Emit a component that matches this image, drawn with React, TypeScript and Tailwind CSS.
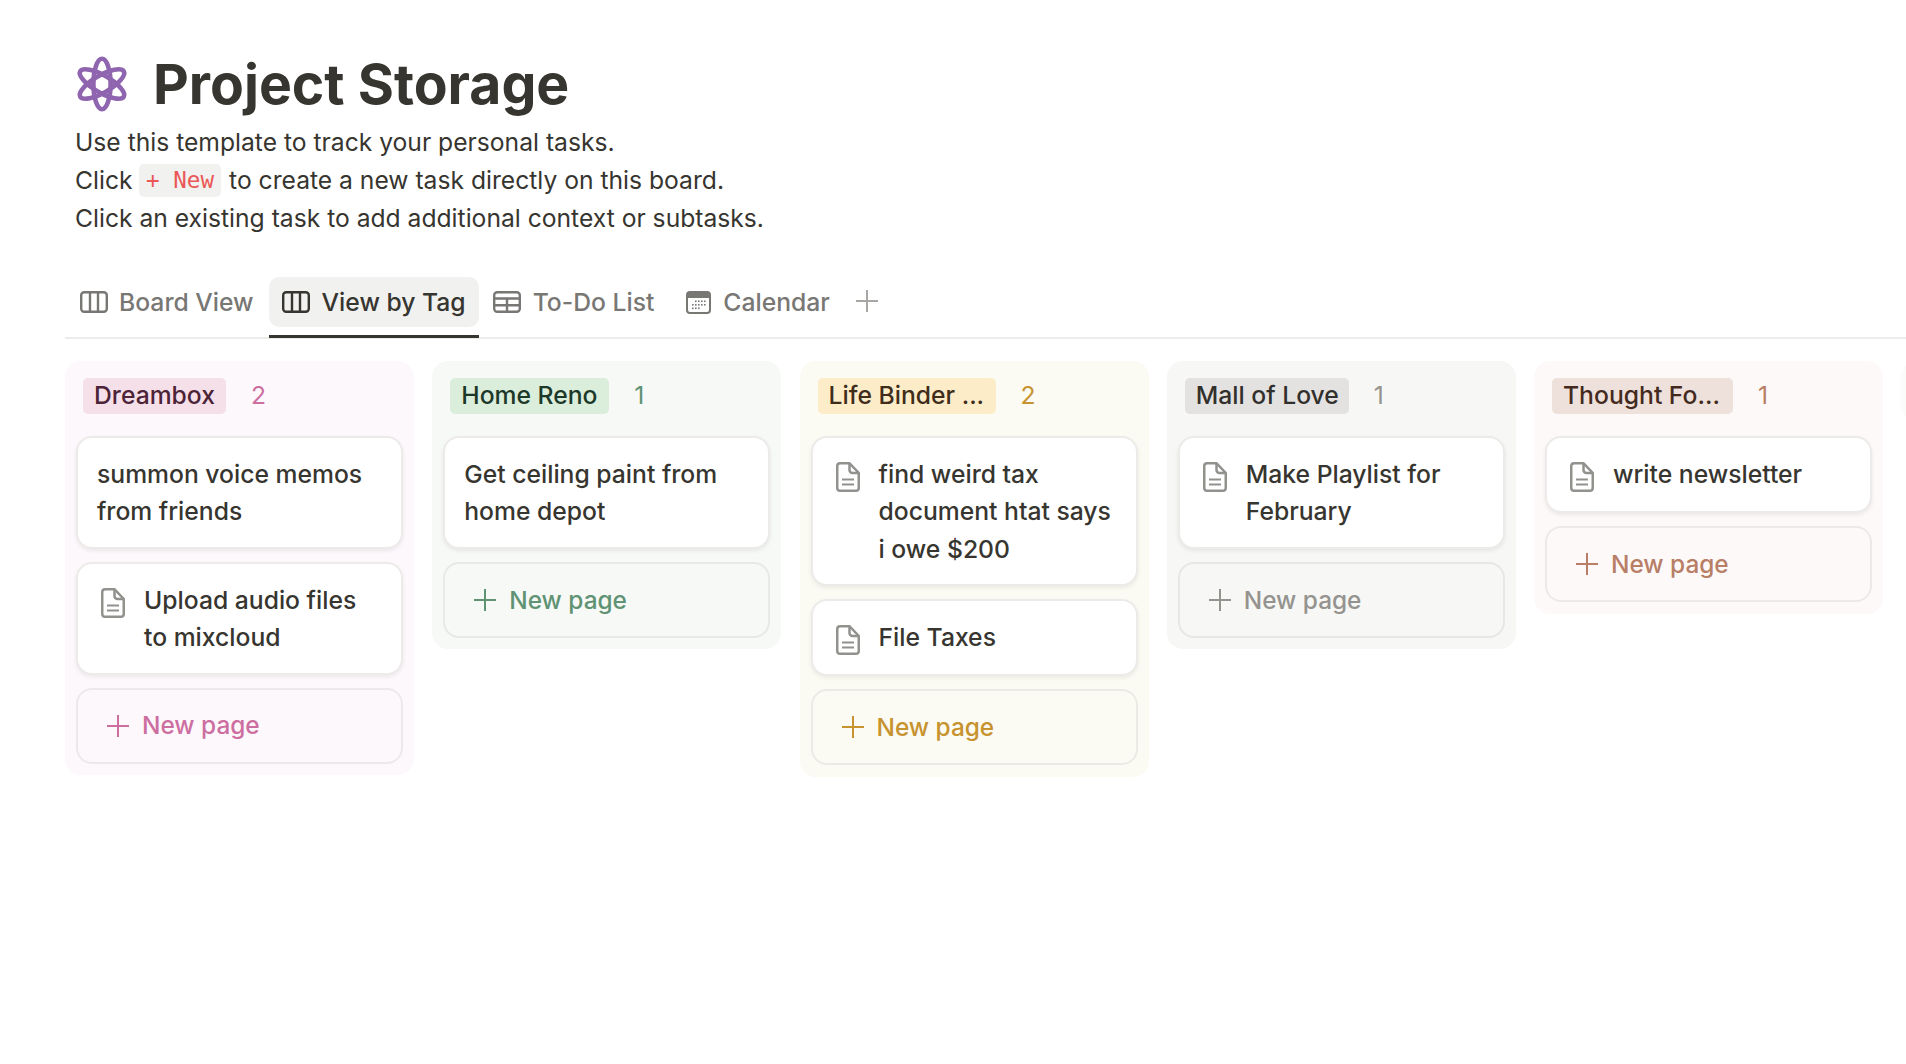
import React from "react";

function Atom() {
  return (
    <svg width="54" height="56" viewBox="0 0 54 56" fill="none" stroke="#9065b0" strokeWidth="4.6">
      <ellipse cx="27" cy="28" rx="8.6" ry="25.2" />
      <ellipse cx="27" cy="28" rx="8.6" ry="25.2" transform="rotate(60 27 28)" />
      <ellipse cx="27" cy="28" rx="8.6" ry="25.2" transform="rotate(120 27 28)" />
    </svg>
  );
}

function BoardIcon({ color }: { color: string }) {
  return (
    <svg width="28" height="22" viewBox="0 0 28 22" fill="none" stroke={color} strokeWidth="2.4" className="shrink-0">
      <rect x="1.2" y="1.2" width="25.6" height="19.6" rx="3" />
      <path d="M10 1v20M18 1v20" />
    </svg>
  );
}

function TableIcon() {
  return (
    <svg width="28" height="22" viewBox="0 0 28 22" fill="none" stroke="#787774" strokeWidth="2.4" className="shrink-0">
      <rect x="1.2" y="1.2" width="25.6" height="19.6" rx="3" />
      <path d="M1 7.5h26M1 14.2h26M14 7.5v13.5" />
    </svg>
  );
}

function CalendarIcon() {
  return (
    <svg width="25" height="23" viewBox="0 0 25 23" className="shrink-0">
      <rect x="1" y="1" width="23" height="21" rx="3" fill="none" stroke="#787774" strokeWidth="2" />
      <path d="M1 4a3 3 0 0 1 3-3h17a3 3 0 0 1 3 3v3H1z" fill="#787774" />
      <g fill="#787774">
        <rect x="9" y="9.5" width="1.6" height="1.6" />
        <rect x="12" y="9.5" width="1.6" height="1.6" />
        <rect x="15" y="9.5" width="1.6" height="1.6" />
        <rect x="18" y="9.5" width="1.6" height="1.6" />
        <rect x="6" y="13" width="1.6" height="1.6" />
        <rect x="9" y="13" width="1.6" height="1.6" />
        <rect x="12" y="13" width="1.6" height="1.6" />
        <rect x="15" y="13" width="1.6" height="1.6" />
        <rect x="18" y="13" width="1.6" height="1.6" />
        <rect x="6" y="16.5" width="1.6" height="1.6" />
        <rect x="9" y="16.5" width="1.6" height="1.6" />
        <rect x="12" y="16.5" width="1.6" height="1.6" />
      </g>
    </svg>
  );
}

function DocIcon() {
  return (
    <svg width="24" height="30" viewBox="0 0 24 30" fill="none" stroke="#91918e" strokeWidth="2.5" className="shrink-0">
      <path d="M4 1.25h9.5L22.75 11v15a2.8 2.8 0 0 1-2.8 2.75H4A2.8 2.8 0 0 1 1.25 26V4A2.8 2.8 0 0 1 4 1.25z" />
      <path d="M13.5 1.25V8a3 3 0 0 0 3 3h6.25" />
      <path d="M6 17.5h12M6 22.5h12" strokeWidth="1.9" />
    </svg>
  );
}

function Plus({ color, size = 22, width = 2 }: { color: string; size?: number; width?: number }) {
  return (
    <svg width={size} height={size} viewBox="0 0 22 22" fill="none" stroke={color} strokeWidth={width} className="shrink-0">
      <path d="M11 0v22M0 11h22" />
    </svg>
  );
}

function Card({ lines, doc }: { lines: string[]; doc?: boolean }) {
  return (
    <div
      className={`flex min-h-[77px] rounded-[16px] border-2 border-[#edebe9] bg-white pt-[18px] pb-[16px] pr-[8px] shadow-[0_2px_4px_rgba(15,15,15,0.07)] ${
        doc ? "pl-[23px]" : "pl-[19px]"
      }`}
    >
      {doc && (
        <div className="mr-[19px] mt-[6px]">
          <DocIcon />
        </div>
      )}
      <div className="text-[24.7px] font-medium leading-[37.4px] text-[#37352f]">
        {lines.map((l) => (
          <div key={l}>{l}</div>
        ))}
      </div>
    </div>
  );
}

type Col = {
  tag: string;
  count: number;
  colBg: string;
  tagBg: string;
  tagText: string;
  accent: string;
  tagW: string;
  cards: { lines: string[]; doc?: boolean }[];
};

const columns: Col[] = [
  {
    tag: "Dreambox",
    count: 2,
    colBg: "bg-[#fdf8fc]",
    tagBg: "bg-[#f5e0e9]",
    tagText: "text-[#4c2337]",
    accent: "#cd6ea1",
    tagW: "w-[143px]",
    cards: [
      { lines: ["summon voice memos", "from friends"] },
      { lines: ["Upload audio files", "to mixcloud"], doc: true },
    ],
  },
  {
    tag: "Home Reno",
    count: 1,
    colBg: "bg-[#f7f9f6]",
    tagBg: "bg-[#dbeddb]",
    tagText: "text-[#1c3829]",
    accent: "#5f9374",
    tagW: "w-[159px]",
    cards: [{ lines: ["Get ceiling paint from", "home depot"] }],
  },
  {
    tag: "Life Binder ...",
    count: 2,
    colBg: "bg-[#fbfaf3]",
    tagBg: "bg-[#fdecc8]",
    tagText: "text-[#402c1b]",
    accent: "#c7932f",
    tagW: "w-[178px]",
    cards: [
      { lines: ["find weird tax", "document htat says", "i owe $200"], doc: true },
      { lines: ["File Taxes"], doc: true },
    ],
  },
  {
    tag: "Mall of Love",
    count: 1,
    colBg: "bg-[#f7f7f5]",
    tagBg: "bg-[#e3e2e0]",
    tagText: "text-[#32302c]",
    accent: "#94938f",
    tagW: "w-[164px]",
    cards: [{ lines: ["Make Playlist for", "February"], doc: true }],
  },
  {
    tag: "Thought Fo...",
    count: 1,
    colBg: "bg-[#fcf9f8]",
    tagBg: "bg-[#eee0da]",
    tagText: "text-[#442a1e]",
    accent: "#b87e66",
    tagW: "w-[181px]",
    cards: [{ lines: ["write newsletter"], doc: true }],
  },
];

function Column({ c }: { c: Col }) {
  return (
    <div className={`w-[349px] shrink-0 rounded-[16px] px-[11px] pt-[17px] pb-[11.5px] ${c.colBg}`}>
      <div className="mb-[22px] flex h-[36px] items-center pl-[7px]">
        <div
          className={`flex h-[36px] items-center rounded-[5px] pl-[11px] text-[24.7px] font-medium ${c.tagW} ${c.tagBg} ${c.tagText}`}
        >
          <span className="whitespace-nowrap">{c.tag}</span>
        </div>
        <span className="ml-[25px] text-[24.7px]" style={{ color: c.accent }}>
          {c.count}
        </span>
      </div>
      <div className="flex flex-col gap-[13px]">
        {c.cards.map((card) => (
          <Card key={card.lines[0]} lines={card.lines} doc={card.doc} />
        ))}
        <div
          className="flex h-[76px] items-center rounded-[16px] border-2 border-[rgba(55,53,47,0.08)] pl-[29px] text-[24.4px] font-medium"
          style={{ color: c.accent }}
        >
          <Plus color={c.accent} />
          <span className="ml-[13px]">New page</span>
        </div>
      </div>
    </div>
  );
}

function Tab({
  icon,
  label,
  active,
  className,
  inner,
}: {
  icon: React.ReactNode;
  label: string;
  active?: boolean;
  className: string;
  inner: string;
}) {
  return (
    <div className={`relative flex h-[61px] flex-col ${className}`}>
      <div
        className={`flex h-[50px] items-center rounded-[10px] text-[24.7px] font-medium ${inner} ${
          active ? "bg-[#f1f1ef] text-[#37352f]" : "text-[#787774]"
        }`}
      >
        {icon}
        <span className="whitespace-nowrap pt-[2px]">{label}</span>
      </div>
      {active && <div className="absolute bottom-0 left-0 right-0 h-[3px] bg-[#37352f]" />}
    </div>
  );
}

export default function App() {
  return (
    <div
      className="h-[1064px] w-[1906px] overflow-hidden bg-white text-[#37352f]"
      style={{ fontFamily: "Inter, 'Liberation Sans', sans-serif" }}
    >
      <div className="pl-[75px] pt-[54px]">
        <div className="flex h-[60px] items-center">
          <Atom />
          <h1 className="ml-[24px] text-[55.3px] font-bold leading-[60px] text-[#37352f]">Project Storage</h1>
        </div>
        <div className="mt-[9px] text-[24.65px] leading-[38px]">
          <div>Use this template to track your personal tasks.</div>
          <div className="flex items-center">
            <span>Click</span>
            <span
              className="ml-[6.5px] mr-[8px] flex h-[33px] items-center rounded-[5px] bg-[#f1f1ef] px-[7px] text-[22.6px] text-[#eb5757]"
              style={{ fontFamily: "'DejaVu Sans Mono', monospace" }}
            >
              + New
            </span>
            <span>to create a new task directly on this board.</span>
          </div>
          <div>Click an existing task to add additional context or subtasks.</div>
        </div>
      </div>

      <div className="ml-[65px] mt-[40px] flex h-[62px] items-start border-b-2 border-[#ececea]">
        <Tab className="ml-[1px]" inner="gap-[11px] pl-[14px] pr-[15px]" icon={<BoardIcon color="#787774" />} label="Board View" />
        <Tab className="" inner="gap-[12px] px-[13px]" active icon={<BoardIcon color="#37352f" />} label="View by Tag" />
        <Tab className="" inner="gap-[12px] px-[14px]" icon={<TableIcon />} label="To-Do List" />
        <Tab className="ml-[4px]" inner="gap-[12px] px-[14px]" icon={<CalendarIcon />} label="Calendar" />
        <div className="ml-[12px] flex h-[48px] items-center">
          <Plus color="#a8a7a4" />
        </div>
      </div>

      <div className="ml-[65px] mt-[22px] flex items-start gap-[18.25px]">
        {columns.map((c) => (
          <Column key={c.tag} c={c} />
        ))}
        <div className="h-[60px] w-[349px] shrink-0 rounded-[16px] bg-[#fbfbfa]" />
      </div>
    </div>
  );
}
